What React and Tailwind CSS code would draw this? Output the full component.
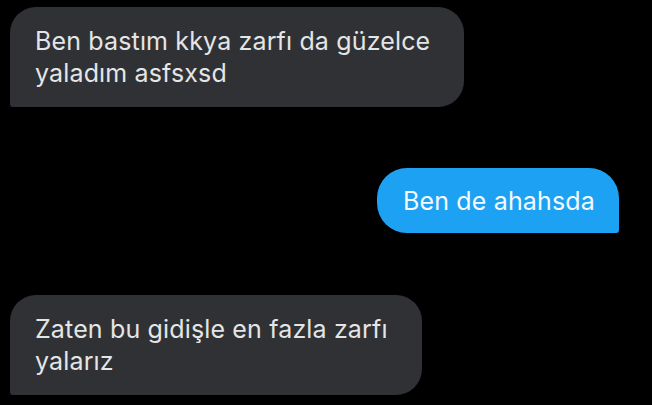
export default function App() {
  const font = { fontFamily: 'Inter, "Noto Sans", sans-serif' };
  return (
    <div className="w-[652px] h-[405px] bg-black overflow-hidden flex flex-col" style={font}>
      <div className="ml-[10px] mt-[7px] w-[454px] h-[100px] bg-[#2f3134] rounded-[26px] rounded-bl-[3px] pl-[25px] pr-[6px] pt-[18px] text-[25px] tracking-[0.15px] leading-[32px] text-[#e4e5e6]">
        Ben bastım kkya zarfı da güzelce yaladım asfsxsd
      </div>
      <div className="mt-[61px] self-end mr-[33px] w-[242px] h-[65px] bg-[#1da1f2] rounded-[30px] rounded-br-[3px] pl-[26px] pt-[17px] text-[25px] tracking-[0.15px] leading-[32px] text-[#f4faff]">
        Ben de ahahsda
      </div>
      <div className="ml-[10px] mt-[62px] w-[412px] h-[100px] bg-[#2f3134] rounded-[26px] rounded-bl-[3px] pl-[25px] pr-[6px] pt-[18px] text-[25px] tracking-[0.15px] leading-[32px] text-[#e4e5e6]">
        Zaten bu gidişle en fazla zarfı yalarız
      </div>
    </div>
  );
}
